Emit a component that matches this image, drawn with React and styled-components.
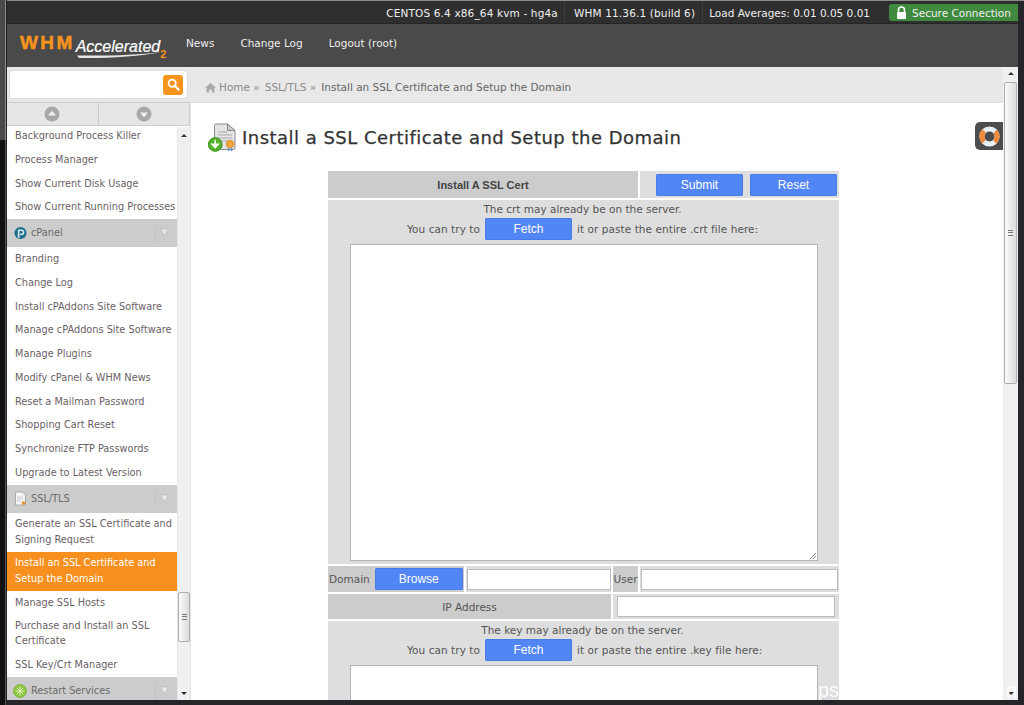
import React from 'react'
import styled, { createGlobalStyle } from 'styled-components'

const GlobalStyle = createGlobalStyle`
  html, body {
    margin: 0;
    padding: 0;
    height: 705px;
    overflow: hidden;
    background: #1d1b1c;
  }
  * { box-sizing: border-box; }
`

const Desktop = styled.div`
  width: 1024px;
  height: 705px;
  padding: 1px 6px 5px 7px;
  background:
    linear-gradient(90deg, #4a4a4a 0, #4a4a4a 5px, #8a8a8a 5px, #8a8a8a 6px, #222 6px) 0 0 / 7px 140px no-repeat,
    linear-gradient(90deg, #111 0, #111 5px, #555 5px, #555 6px, #222 6px) 0 140px / 7px 565px no-repeat,
    linear-gradient(180deg, #8a8a8a 0, #8a8a8a 1px, #26252a 1px);
  font-family: "DejaVu Sans", sans-serif;
  overflow: hidden;
`

const Win = styled.div`
  height: 699px;
  background: #fff;
  display: flex;
  flex-direction: column;
  overflow: hidden;
  position: relative;
`

const TopBar = styled.div`
  height: 23px;
  flex: none;
  background: #2f2f2f;
  border-bottom: 1px solid #252525;
  display: flex;
  justify-content: flex-end;
  align-items: center;
  color: #f0f0f0;
  font-size: 10.5px;
`

const Stat = styled.div`
  padding: ${p => p.$pad};
  height: 22px;
  line-height: 24px;
  border-right: ${p => (p.$last ? 'none' : '1px solid #3d3d3d')};
  letter-spacing: ${p => p.$spacing || 0}px;
  white-space: nowrap;
`

const Secure = styled.div`
  width: 129px;
  height: 17px;
  margin-top: 1px;
  background: #3f8a3e;
  border-radius: 3px 0 0 3px;
  display: flex;
  align-items: center;
  padding-left: 7px;
  gap: 5px;
  white-space: nowrap;
`

const Nav = styled.div`
  height: 43px;
  flex: none;
  background: #4a4a4a;
  display: flex;
  align-items: center;
  padding-left: 13px;
  color: #eee;
  font-size: 10.5px;
`

const Logo = styled.div`
  width: 166px;
  flex: none;
  height: 28px;
  display: flex;
  align-items: flex-start;
  white-space: nowrap;
  position: relative;
  padding-top: 1px;
`

const LogoWhm = styled.span`
  font-family: "Liberation Sans", sans-serif;
  font-weight: 700;
  font-size: 19px;
  line-height: 19px;
  letter-spacing: 2.4px;
  color: #f7941d;
  -webkit-text-stroke: 0.5px #f7941d;
`

const LogoAcc = styled.span`
  font-family: "Liberation Sans", sans-serif;
  font-style: italic;
  font-size: 16px;
  line-height: 16px;
  color: #fff;
  margin: 6px 0 0 1px;
  -webkit-text-stroke: 0.2px #fff;
`

const LogoTwo = styled.span`
  font-family: "Liberation Sans", sans-serif;
  font-weight: 700;
  font-size: 11px;
  line-height: 11px;
  color: #f7941d;
  margin-top: 16px;
`

const Swoosh = styled.svg`
  position: absolute;
  left: 57px;
  top: 20px;
`

const NavLink = styled.div`
  margin-right: 26px;
  margin-bottom: 5px;
  white-space: nowrap;
`

const Body = styled.div`
  flex: 1;
  min-height: 0;
  display: flex;
`

const Side = styled.div`
  width: 183px;
  flex: none;
  display: flex;
  flex-direction: column;
  background: #e8e8e8;
`

const SearchWrap = styled.div`
  height: 35px;
  flex: none;
  padding: 4px 3px;
`

const SearchBox = styled.div`
  height: 27px;
  background: #fff;
  border-radius: 3px;
  box-shadow: 0 0 0 1px #dcdcdc;
  display: flex;
  justify-content: flex-end;
  align-items: center;
  padding-right: 4px;
`

const SearchBtn = styled.div`
  width: 20px;
  height: 20px;
  border-radius: 3px;
  background: #f7941d;
  display: flex;
  align-items: center;
  justify-content: center;
`

const Arrows = styled.div`
  height: 24px;
  flex: none;
  display: flex;
  border-top: 1px solid #ccc;
  border-bottom: 1px solid #ccc;
  background: #e6e6e6;
`

const ArrowCell = styled.div`
  flex: 1;
  display: flex;
  align-items: center;
  justify-content: center;
  border-right: 1px solid #ccc;
`

const SideBody = styled.div`
  flex: 1;
  min-height: 0;
  display: flex;
  background: #fff;
  border-top: 1px solid #fff;
`

const List = styled.div`
  width: 170px;
  flex: none;
  overflow: hidden;
  display: flex;
  flex-direction: column;
  color: #6a5f66;
  font-size: 9.75px;
`

const Item = styled.div`
  flex: none;
  padding: ${p => (p.$tall ? '3.5px 4px 4px 8px' : '0 4px 0 8px')};
  height: ${p => (p.$tall ? 39 : 23.75)}px;
  line-height: ${p => (p.$tall ? '15.5px' : '23.75px')};
  white-space: ${p => (p.$tall ? 'normal' : 'nowrap')};
  background: ${p => (p.$active ? '#f7901e' : 'transparent')};
  color: ${p => (p.$active ? '#fff' : 'inherit')};
  &:first-child {
    margin-top: -3px;
  }
`

const Group = styled.div`
  flex: none;
  height: 28px;
  background: #cccccc;
  display: flex;
  align-items: center;
  padding: 0 0 1px 7px;
  gap: 4px;
  color: #6a6a6a;
`

const GroupName = styled.span`
  flex: 1;
`

const GroupArrow = styled.span`
  width: 18px;
  height: 16px;
  border-left: 1px solid #c2c2c2;
  display: flex;
  align-items: center;
  justify-content: center;
  margin-right: 4px;
`

const ScrollTrack = styled.div`
  flex: 1;
  background: #f0f0f0;
  position: relative;
  display: flex;
  flex-direction: column;
  justify-content: space-between;
  align-items: center;
  padding: 7px 0 5px;
  border-left: 1px solid #e6e6e6;
`

const ScrollArrow = styled.div`
  width: 0;
  height: 0;
  border-left: 3px solid transparent;
  border-right: 3px solid transparent;
  ${p => (p.$up ? 'border-bottom: 3px solid #333;' : 'border-top: 3px solid #333;')}
`

const Thumb = styled.div`
  position: absolute;
  left: ${p => p.$left}px;
  right: ${p => p.$left}px;
  top: ${p => p.$top}px;
  height: ${p => p.$h}px;
  background: linear-gradient(90deg, #fafafa, #dcdcdc);
  border: 1px solid #b0b0b0;
  border-radius: 2px;
  display: flex;
  align-items: center;
  justify-content: center;
`

const Grip = styled.div`
  width: 5px;
  height: 6px;
  border-top: 1px solid #777;
  border-bottom: 1px solid #777;
  position: relative;
  &:after {
    content: '';
    position: absolute;
    left: 0;
    right: 0;
    top: 1px;
    height: 1px;
    background: #777;
  }
`

const Main = styled.div`
  flex: 1;
  min-width: 0;
  display: flex;
  flex-direction: column;
  border-left: 1px solid #e4e4e4;
  overflow: hidden;
  position: relative;
`

const Crumbs = styled.div`
  height: 36px;
  flex: none;
  background: #e8e8e8;
  border-bottom: 1px solid #dedede;
  display: flex;
  align-items: center;
  padding: 5px 0 0 14px;
  color: #666;
  font-size: 10.5px;
  gap: 5px;
  white-space: nowrap;
`

const CrumbIcon = styled.svg`
  margin-right: -2px;
`

const CrumbLink = styled.span`
  color: #8a8a8a;
`

const TitleRow = styled.div`
  flex: none;
  height: 68px;
  display: flex;
  align-items: center;
  padding-left: 17px;
  gap: 5px;
`

const Title = styled.h1`
  margin: 0;
  font-size: 18px;
  font-weight: 400;
  letter-spacing: 0.48px;
  color: #333;
  -webkit-text-stroke: 0.25px #333;
  white-space: nowrap;
`

const HelpTab = styled.div`
  position: absolute;
  right: 0;
  top: 55px;
  width: 28px;
  height: 28px;
  background: #4d4d4d;
  border-radius: 5px 0 0 5px;
  display: flex;
  align-items: center;
  justify-content: center;
`

const Form = styled.div`
  width: 511px;
  margin-left: 137px;
  flex: none;
  display: flex;
  flex-direction: column;
  gap: 2px;
  color: #555;
  font-size: 10.5px;
`

const Row = styled.div`
  display: flex;
  gap: 2px;
  height: ${p => p.$h}px;
`

const Cell = styled.div`
  width: ${p => (p.$w ? `${p.$w}px` : 'auto')};
  flex: ${p => (p.$w ? 'none' : 1)};
  background: ${p => (p.$dark ? '#cccccc' : '#dedede')};
  display: flex;
  align-items: center;
  justify-content: ${p => p.$justify || 'center'};
  gap: ${p => p.$gap || 0}px;
  padding: ${p => p.$pad || 0};
  white-space: nowrap;
`

const Strong = styled.b`
  font-family: "Liberation Sans", sans-serif;
  font-size: 11px;
  color: #444;
`

const Btn = styled.div`
  width: ${p => p.$w}px;
  height: 22px;
  flex: none;
  background: #5285f6;
  border-radius: 2px;
  box-shadow: inset 0 0 0 1px #4a7ae6;
  color: #fff;
  font-family: "Liberation Sans", sans-serif;
  font-size: 12px;
  letter-spacing: 0;
  display: flex;
  align-items: center;
  justify-content: center;
`

const Panel = styled.div`
  background: #dedede;
  display: flex;
  flex-direction: column;
  align-items: center;
  padding: 0 21px 3px 22px;
`

const Line = styled.div`
  height: 18px;
  line-height: 18px;
  padding-right: 3px;
  white-space: nowrap;
`

const FetchLine = styled.div`
  display: flex;
  align-items: center;
  align-self: flex-start;
  margin-left: 57px;
  gap: 5px;
  height: 22px;
  letter-spacing: 0.06px;
  white-space: nowrap;
`

const TextBox = styled.div`
  width: 468px;
  height: ${p => p.$h}px;
  margin-top: 4px;
  flex: none;
  background: #fff;
  border: 1px solid #b4b4b4;
  position: relative;
`

const Resize = styled.svg`
  position: absolute;
  right: 0;
  bottom: 0;
`

const Field = styled.div`
  height: 21px;
  width: ${p => (p.$w ? `${p.$w}px` : 'auto')};
  flex: ${p => (p.$w ? 'none' : 1)};
  background: #fff;
  border: 1px solid #bbb;
`

const PageScroll = styled.div`
  width: 15px;
  flex: none;
  background: #f0f0f0;
  position: relative;
  display: flex;
  flex-direction: column;
  justify-content: space-between;
  align-items: center;
  padding: 5px 0;
`

// watermark that lies over the bottom of the window
const Stamp = styled.div`
  position: absolute;
  bottom: 0;
  left: ${p => p.$left}px;
  color: #fff;
  opacity: 0.9;
  font-family: "Liberation Sans", sans-serif;
  font-size: 20px;
  line-height: 20px;
`

const LockIcon = () => (
  <svg width="11" height="13" viewBox="0 0 11 13">
    <path d="M2.5 6V4a3 3 0 0 1 6 0v2" fill="none" stroke="#fff" strokeWidth="1.6" />
    <rect x="1" y="6" width="9" height="7" rx="1" fill="#fff" />
  </svg>
)

const SearchIcon = () => (
  <svg width="13" height="13" viewBox="0 0 13 13">
    <circle cx="5.2" cy="5.2" r="3.6" fill="none" stroke="#fff" strokeWidth="1.8" />
    <path d="M8 8l3.6 3.6" stroke="#fff" strokeWidth="2.2" strokeLinecap="round" />
  </svg>
)

const RoundArrow = ({ up }) => (
  <svg width="16" height="16" viewBox="0 0 16 16">
    <circle cx="8" cy="8" r="7.5" fill="#a8a8a8" />
    <path d={up ? 'M8 4.5l4 5H4z' : 'M8 11.5l4-5H4z'} fill="#eee" />
  </svg>
)

const GroupCaret = () => (
  <svg width="9" height="9" viewBox="0 0 9 9">
    <path d="M.5 1h8L4.5 8z" fill="#e8e8e8" stroke="#b8b8b8" strokeWidth="0.7" />
  </svg>
)

const CpanelIcon = () => (
  <svg width="13" height="14" viewBox="0 0 14 14">
    <circle cx="7" cy="7" r="6.5" fill="#1f6f8b" />
    <path d="M5 12V4h3a2.2 2.2 0 0 1 0 4.6H6.6" fill="none" stroke="#d6e8ee" strokeWidth="1.8" />
  </svg>
)

const DocIcon = () => (
  <svg width="13" height="15" viewBox="0 0 13 15">
    <path d="M1.5 1h7l3 3v10h-10z" fill="#f4f4f4" stroke="#aaa" />
    <path d="M3 6h6M3 8h6M3 10h4" stroke="#ccc" />
    <circle cx="9.5" cy="12" r="1.8" fill="#f0902a" />
  </svg>
)

const RestartIcon = () => (
  <svg width="14" height="14" viewBox="0 0 14 14" style={{ marginLeft: -1 }}>
    <circle cx="7" cy="7" r="6.5" fill="#8dc63f" stroke="#6aa32a" strokeWidth="0.6" />
    <path d="M7 2.5v9M2.5 7h9M3.8 3.8l6.4 6.4M10.2 3.8l-6.4 6.4" stroke="#e2f4c4" strokeWidth="1" />
  </svg>
)

const HomeIcon = () => (
  <CrumbIcon width="11" height="11" viewBox="0 0 11 11">
    <path d="M5.5 1L0 6h1.6v4.5h2.6V7.4h2.6v3.1h2.6V6H11z" fill="#a8a8a8" />
  </CrumbIcon>
)

const CertIcon = () => (
  <svg width="29" height="29" viewBox="0 0 29 29">
    <path d="M8 1h11.5L27 7.5V25a1.5 1.5 0 0 1-1.5 1.5H8A1.5 1.5 0 0 1 6.5 25V2.5A1.5 1.5 0 0 1 8 1z" fill="#e4e4e4" stroke="#8a8a8a" />
    <path d="M19.5 1v6.5H27z" fill="#cfcfcf" stroke="#8a8a8a" />
    <path d="M10 9h9M10 12h14M10 15h14M13 18h6" stroke="#a9a9a9" />
    <circle cx="22" cy="21" r="3.8" fill="#f3a33c" stroke="#c77a1a" strokeWidth="0.6" />
    <path d="M20.5 25v3M23.5 25v3" stroke="#5a8fd0" strokeWidth="1.5" />
    <circle cx="7.2" cy="21.5" r="6.8" fill="#54b22b" stroke="#2f8a14" />
    <path d="M7.2 16.8v5M4 21.2l3.2 3.6 3.2-3.6z" fill="#fff" stroke="#fff" strokeWidth="1.4" />
  </svg>
)

const LifeRing = () => (
  <svg width="21" height="21" viewBox="0 0 21 21">
    <circle cx="10.5" cy="10.5" r="7.6" fill="none" stroke="#e6f0f8" strokeWidth="5" />
    <circle cx="10.5" cy="10.5" r="7.6" fill="none" stroke="#ee8a3c" strokeWidth="5" strokeDasharray="11.94 11.94" strokeDashoffset="5.97" />
  </svg>
)

const App = () => (
  <Desktop>
    <GlobalStyle />
    <Win>
      <TopBar>
        <Stat $pad="0 6px 0 0" $spacing={0.15}>CENTOS 6.4 x86_64 kvm - hg4a</Stat>
        <Stat $pad="0 7px 0 9px" $spacing={0.15}>WHM 11.36.1 (build 6)</Stat>
        <Stat $pad="0 19px 0 6px" $last>Load Averages: 0.01 0.05 0.01</Stat>
        <Secure><LockIcon />Secure Connection</Secure>
      </TopBar>
      <Nav>
        <Logo>
          <LogoWhm>WHM</LogoWhm>
          <LogoAcc>Accelerated</LogoAcc>
          <LogoTwo>2</LogoTwo>
          <Swoosh width="90" height="8" viewBox="0 0 90 8">
            <path d="M0 3.5C30 4 60 3 84 0C62 4.5 30 6.5 2 6z" fill="#e8e8e8" />
          </Swoosh>
        </Logo>
        <NavLink>News</NavLink>
        <NavLink>Change Log</NavLink>
        <NavLink>Logout (root)</NavLink>
      </Nav>
      <Body>
        <Side>
          <SearchWrap>
            <SearchBox>
              <SearchBtn><SearchIcon /></SearchBtn>
            </SearchBox>
          </SearchWrap>
          <Arrows>
            <ArrowCell><RoundArrow up /></ArrowCell>
            <ArrowCell><RoundArrow /></ArrowCell>
          </Arrows>
          <SideBody>
            <List>
              <Item>Background Process Killer</Item>
              <Item>Process Manager</Item>
              <Item>Show Current Disk Usage</Item>
              <Item>Show Current Running Processes</Item>
              <Group><CpanelIcon /><GroupName>cPanel</GroupName><GroupArrow><GroupCaret /></GroupArrow></Group>
              <Item>Branding</Item>
              <Item>Change Log</Item>
              <Item>Install cPAddons Site Software</Item>
              <Item>Manage cPAddons Site Software</Item>
              <Item>Manage Plugins</Item>
              <Item>Modify cPanel &amp; WHM News</Item>
              <Item>Reset a Mailman Password</Item>
              <Item>Shopping Cart Reset</Item>
              <Item>Synchronize FTP Passwords</Item>
              <Item>Upgrade to Latest Version</Item>
              <Group><DocIcon /><GroupName>SSL/TLS</GroupName><GroupArrow><GroupCaret /></GroupArrow></Group>
              <Item $tall>Generate an SSL Certificate and Signing Request</Item>
              <Item $tall $active>Install an SSL Certificate and Setup the Domain</Item>
              <Item>Manage SSL Hosts</Item>
              <Item $tall>Purchase and Install an SSL Certificate</Item>
              <Item>SSL Key/Crt Manager</Item>
              <Group><RestartIcon /><GroupName>Restart Services</GroupName><GroupArrow><GroupCaret /></GroupArrow></Group>
            </List>
            <ScrollTrack>
              <ScrollArrow $up />
              <Thumb $left={0} $top={465} $h={50}><Grip /></Thumb>
              <ScrollArrow />
            </ScrollTrack>
          </SideBody>
        </Side>
        <Main>
          <Crumbs>
            <HomeIcon />
            <CrumbLink>Home »</CrumbLink>
            <CrumbLink>SSL/TLS »</CrumbLink>
            <span>Install an SSL Certificate and Setup the Domain</span>
          </Crumbs>
          <TitleRow>
            <CertIcon />
            <Title>Install a SSL Certificate and Setup the Domain</Title>
          </TitleRow>
          <HelpTab><LifeRing /></HelpTab>
          <Form>
            <Row $h={27}>
              <Cell $w={310} $dark><Strong>Install A SSL Cert</Strong></Cell>
              <Cell $justify="flex-end" $gap={7} $pad="0 2px 0 0"><Btn $w={87}>Submit</Btn><Btn $w={87}>Reset</Btn></Cell>
            </Row>
            <Panel>
              <Line>The crt may already be on the server.</Line>
              <FetchLine>You can try to <Btn $w={87}>Fetch</Btn> it or paste the entire .crt file here:</FetchLine>
              <TextBox $h={317}>
                <Resize width="10" height="10" viewBox="0 0 10 10">
                  <path d="M9 3L3 9M9 6L6 9" stroke="#888" strokeWidth="1" />
                </Resize>
              </TextBox>
            </Panel>
            <Row $h={26}>
              <Cell $w={136} $dark $justify="flex-start" $gap={5} $pad="0 0 0 1px">Domain<Btn $w={88}>Browse</Btn></Cell>
              <Cell $w={145} $justify="flex-end"><Field $w={144} /></Cell>
              <Cell $w={25} $dark>User</Cell>
              <Cell $pad="0 1px"><Field /></Cell>
            </Row>
            <Row $h={25}>
              <Cell $w={283} $dark>IP Address</Cell>
              <Cell><Field $w={218} /></Cell>
            </Row>
            <Panel>
              <Line>The key may already be on the server.</Line>
              <FetchLine>You can try to <Btn $w={87}>Fetch</Btn> it or paste the entire .key file here:</FetchLine>
              <TextBox $h={120} />
            </Panel>
          </Form>
        </Main>
        <PageScroll>
          <ScrollArrow $up />
          <Thumb $left={1} $top={15} $h={302}><Grip /></Thumb>
          <ScrollArrow />
        </PageScroll>
      </Body>
      <Stamp $left={811}>ps</Stamp>
      <Stamp $left={999}>n</Stamp>
    </Win>
  </Desktop>
)

export default App
